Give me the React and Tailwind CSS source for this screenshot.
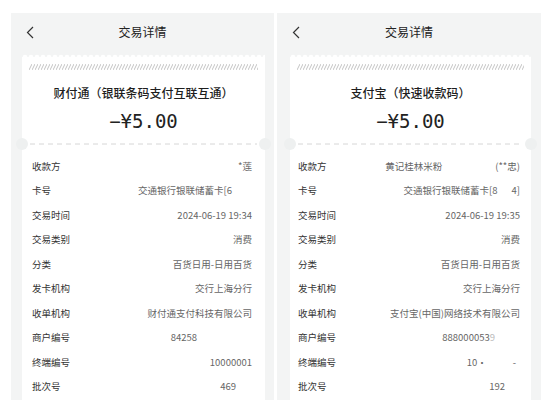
import React from "react";

const FONT = "font-['Noto_Sans_CJK_SC','Noto_Sans',sans-serif]";

function Scallop({ id }) {
  return (
    <svg className="block w-full h-[4px]">
      <defs>
        <pattern id={id} width="6" height="4" patternUnits="userSpaceOnUse">
          <circle cx="3" cy="4.2" r="2.4" fill="#ffffff" />
        </pattern>
      </defs>
      <rect width="100%" height="100%" fill={`url(#${id})`} />
    </svg>
  );
}

function Hatch({ id }) {
  return (
    <svg className="block w-full h-[6px]">
      <defs>
        <pattern id={id} width="3" height="6" patternUnits="userSpaceOnUse">
          <line x1="0" y1="6" x2="3" y2="0" stroke="#bdbdbd" strokeWidth="0.9" />
        </pattern>
      </defs>
      <rect width="100%" height="100%" fill={`url(#${id})`} />
    </svg>
  );
}

function Separator() {
  return (
    <div className="relative h-[20px] flex items-center">
      <div className="absolute -left-[6px] top-[4px] w-[12px] h-[12px] rounded-full bg-[#eef0f0]" />
      <div className="absolute -right-[6px] top-[4px] w-[12px] h-[12px] rounded-full bg-[#eef0f0]" />
      <svg className="block w-full h-[2px] mx-[8px]">
        <line x1="0" y1="1" x2="100%" y2="1" stroke="#d6d6d6" strokeWidth="1" strokeDasharray="5 4" />
      </svg>
    </div>
  );
}

function Row({ label, children }) {
  return (
    <div className="flex items-center justify-between h-[24.5px]">
      <span className="text-[9.5px] text-[#333] leading-none">{label}</span>
      <div className="flex items-center text-[9.5px] text-[#666] leading-none">{children}</div>
    </div>
  );
}

function Panel({ pid, title, time, left }) {
  return (
    <div className={`bg-[#f3f4f4] h-full flex flex-col ${left ? "w-[263px]" : "w-[264px]"}`}>
      <div className="relative h-[38px] flex items-center justify-center shrink-0">
        <svg className="absolute left-[15px] top-[13px] w-[8px] h-[13px]" viewBox="0 0 8 13">
          <polyline points="7,1 1.5,6.5 7,12" fill="none" stroke="#333" strokeWidth="1.2" />
        </svg>
        <span className="text-[12px] text-[#222] leading-none">交易详情</span>
      </div>
      <div className={`mt-[2px] ${left ? "ml-[11px] w-[243px]" : "ml-[13px] w-[241px]"}`}>
        <Scallop id={`sc-${pid}`} />
        <div className="bg-white flex flex-col">
          <div className="mt-[7px] mx-[7px]">
            <Hatch id={`ht-${pid}`} />
          </div>
          <div className="mt-[13px] h-[20px] flex items-center justify-center text-[12px] text-[#1e1e1e] font-medium leading-none">
            {title}
          </div>
          <div className="mt-[5px] h-[26px] flex items-center justify-center text-[19px] text-[#222] leading-none font-['DejaVu_Sans_Mono','Liberation_Mono',monospace]">
            −¥5.00
          </div>
          <Separator />
          <div className={left ? "pl-[10px] pr-[13px]" : "pl-[8px] pr-[11px]"}>
            {left ? (
              <>
                <Row label="收款方"><span>*莲</span></Row>
                <Row label="卡号"><span className="mr-[20px]">交通银行银联储蓄卡[6</span></Row>
                <Row label="交易时间"><span>{time}</span></Row>
                <Row label="交易类别"><span>消费</span></Row>
                <Row label="分类"><span>百货日用-日用百货</span></Row>
                <Row label="发卡机构"><span>交行上海分行</span></Row>
                <Row label="收单机构"><span>财付通支付科技有限公司</span></Row>
                <Row label="商户编号"><span className="mr-[55px]">84258</span></Row>
                <Row label="终端编号"><span>10000001</span></Row>
                <Row label="批次号"><span className="mr-[16px]">469</span></Row>
              </>
            ) : (
              <>
                <Row label="收款方">
                  <span className="mr-[53px]">黄记桂林米粉</span>
                  <span>(**忠)</span>
                </Row>
                <Row label="卡号"><span>交通银行银联储蓄卡[8<span className="inline-block w-[14px]" />4]</span></Row>
                <Row label="交易时间"><span>{time}</span></Row>
                <Row label="交易类别"><span>消费</span></Row>
                <Row label="分类"><span>百货日用-日用百货</span></Row>
                <Row label="发卡机构"><span>交行上海分行</span></Row>
                <Row label="收单机构"><span>支付宝(中国)网络技术有限公司</span></Row>
                <Row label="商户编号"><span className="mr-[25px]">888000053<span className="text-[#bbb]">9</span></span></Row>
                <Row label="终端编号">
                  <span className="mr-[26px]">10·</span>
                  <span className="mr-[4px]">-</span>
                </Row>
                <Row label="批次号"><span className="mr-[15px]">192</span></Row>
              </>
            )}
          </div>
          <div className="h-[40px]" />
        </div>
      </div>
    </div>
  );
}

export default function App() {
  return (
    <div className={`w-[541px] h-[400px] bg-white overflow-hidden flex pt-[13px] ${FONT}`}>
      <div className="ml-[11px] h-[420px] flex">
        <Panel pid="a" left title="财付通（银联条码支付互联互通）" time="2024-06-19 19:34" />
        <div className="w-[3px] bg-white" />
        <Panel pid="b" title="支付宝（快速收款码）" time="2024-06-19 19:35" />
      </div>
    </div>
  );
}
